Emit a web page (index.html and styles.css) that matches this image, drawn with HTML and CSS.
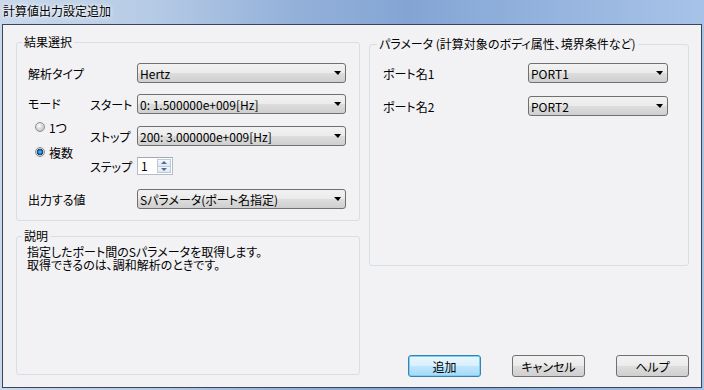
FILE: index.html
```html
<!DOCTYPE html>
<html lang="ja">
<head>
  <meta charset="UTF-8">
  <title>計算値出力設定追加</title>
  <link rel="stylesheet" href="styles.css">
</head>
<body>
  <div class="window">
    <div class="titlebar">計算値出力設定追加</div>
    <div class="client">
      <div class="col-left">
        <fieldset class="group group-result">
          <legend>結果選択</legend>
          <div class="group-body">
            <div class="row row-type">
              <span class="lbl lbl-main">解析タイプ</span>
              <div class="combo combo-main"><span class="combo-text">Hertz</span><span class="arrow"></span></div>
            </div>
            <div class="mode">
              <div class="mode-left">
                <div class="mode-title">モード</div>
                <label class="radio-row r-one"><span class="radio"></span>1つ</label>
                <label class="radio-row r-many"><span class="radio checked"></span>複数</label>
              </div>
              <div class="mode-right">
                <div class="row">
                  <span class="lbl lbl-sub">スタート</span>
                  <div class="combo combo-main"><span class="combo-text">0: 1.500000e+009[Hz]</span><span class="arrow"></span></div>
                </div>
                <div class="row row-stop">
                  <span class="lbl lbl-sub">ストップ</span>
                  <div class="combo combo-main"><span class="combo-text">200: 3.000000e+009[Hz]</span><span class="arrow"></span></div>
                </div>
                <div class="row row-step">
                  <span class="lbl lbl-sub">ステップ</span>
                  <div class="spin">
                    <span class="spin-val">1</span>
                    <span class="spin-btns">
                      <span class="spin-up"><i class="tri-up"></i></span>
                      <span class="spin-down"><i class="tri-down"></i></span>
                    </span>
                  </div>
                </div>
              </div>
            </div>
            <div class="row row-output">
              <span class="lbl lbl-main">出力する値</span>
              <div class="combo combo-main"><span class="combo-text">Sパラメータ(ポート名指定)</span><span class="arrow"></span></div>
            </div>
          </div>
        </fieldset>

        <fieldset class="group group-desc">
          <legend>説明</legend>
          <div class="desc-body">
            <p>指定したポート間のSパラメータを取得します。</p>
            <p>取得できるのは、調和解析のときです。</p>
          </div>
        </fieldset>
      </div>

      <div class="col-right">
        <fieldset class="group group-param">
          <legend>パラメータ (計算対象のボディ属性、境界条件など)</legend>
          <div class="param-body">
            <div class="row row-port1">
              <span class="lbl lbl-port">ポート名1</span>
              <div class="combo combo-port"><span class="combo-text">PORT1</span><span class="arrow"></span></div>
            </div>
            <div class="row row-port2">
              <span class="lbl lbl-port">ポート名2</span>
              <div class="combo combo-port"><span class="combo-text">PORT2</span><span class="arrow"></span></div>
            </div>
          </div>
        </fieldset>

        <div class="buttons">
          <button class="btn btn-default">追加</button>
          <button class="btn">キャンセル</button>
          <button class="btn">ヘルプ</button>
        </div>
      </div>
    </div>
  </div>
</body>
</html>
```

FILE: styles.css
```css
* {
  box-sizing: border-box;
}
body {
  margin: 0;
  font-family: "Noto Sans CJK JP", sans-serif;
  font-size: 12px;
  font-feature-settings: "palt";
  color: #000;
}
.window {
  width: 704px;
  height: 390px;
  display: flex;
  flex-direction: column;
  padding: 0 2px 2px 2px;
  background: linear-gradient(90deg, #c9d8ea 0%, #b5cae5 22%, #93b0d9 42%, #84a5d4 58%, #94b3de 78%, #a8c3e8 100%);
}
.titlebar {
  height: 24px;
  line-height: 22px;
  padding-left: 1px;
  font-feature-settings: normal;
  text-shadow: 0 0 6px #fff, 0 0 3px #fff;
}
.client {
  flex: 1;
  display: flex;
  gap: 9px;
  padding: 0 12px 0 13px;
  border: 1px solid #3a4658;
  background: #f2f1f4;
}

/* group boxes */
.group {
  margin: 0;
  padding: 0;
  border: 1px solid #d5dfe5;
  border-radius: 3px;
}
.group legend {
  padding: 0 2px;
  margin-left: 5px;
  line-height: 14px;
}
.col-left {
  width: 344px;
  display: flex;
  flex-direction: column;
  gap: 8px;
  padding-top: 10px;
}
.group-result {
  height: 186px;
}
.group-desc {
  height: 146px;
}
.col-right {
  width: 320px;
  display: flex;
  flex-direction: column;
  justify-content: space-between;
  padding: 12px 0 10px 0;
}
.group-param {
  height: 229px;
}
.group-param legend {
  margin-left: 7px;
}

.group-body {
  padding: 0 13px 0 11px;
}
.row {
  display: flex;
  align-items: center;
  height: 20px;
}
.row-type {
  margin-top: 14px;
}
.lbl {
  white-space: nowrap;
}
.lbl-main {
  width: 109px;
}
.lbl-sub {
  width: 47px;
}

/* combo boxes */
.combo {
  height: 20px;
  display: flex;
  align-items: center;
  padding: 0 4px 0 2px;
  border: 1px solid #707070;
  border-radius: 3px;
  background: linear-gradient(#f2f2f2 0%, #ebebeb 48%, #dddddd 52%, #cfcfcf 100%);
}
.combo-text {
  flex: 1;
  white-space: nowrap;
  overflow: hidden;
}
.combo-main {
  width: 209px;
}
.arrow {
  width: 0;
  height: 0;
  border-left: 4px solid transparent;
  border-right: 3px solid transparent;
  border-top: 4px solid #000;
}

/* mode block */
.mode {
  display: flex;
  margin-top: 11px;
}
.mode-left {
  width: 62px;
}
.mode-title {
  height: 20px;
  line-height: 20px;
}
.radio-row {
  display: flex;
  align-items: center;
  gap: 4px;
  height: 18px;
  padding-left: 7px;
}
.r-one {
  margin-top: 4px;
}
.r-many {
  margin-top: 7px;
}
.radio {
  width: 10px;
  height: 10px;
  border-radius: 50%;
  border: 1px solid #8c8e91;
  background: radial-gradient(circle at 40% 35%, #ffffff 0, #e6e6e6 2px, #c9c9c9 5px);
}
.radio.checked {
  background: radial-gradient(circle at 50% 50%, #7ed2f7 0, #2b82c6 1.5px, #123f78 3px, #d8d8d8 3.6px, #f2f2f2 5px);
}
.mode-right {
  display: flex;
  flex-direction: column;
}
.row-stop {
  margin-top: 12px;
}
.row-step {
  margin-top: 11px;
  height: 18px;
}
.spin {
  width: 36px;
  height: 18px;
  display: flex;
  border: 1px solid #b7bcc4;
  border-top-color: #a3a8b0;
  background: #fff;
}
.spin-val {
  flex: 1;
  padding-left: 3px;
  line-height: 16px;
}
.spin-btns {
  width: 15px;
  display: flex;
  flex-direction: column;
  padding: 1px 1px 1px 0;
}
.spin-up,
.spin-down {
  flex: 1;
  display: flex;
  align-items: center;
  justify-content: center;
  border: 1px solid #bccbdc;
  background: linear-gradient(#f4f8fc, #dde7f1);
}
.spin-up {
  border-bottom: none;
}
.tri-up {
  border-left: 3px solid transparent;
  border-right: 3px solid transparent;
  border-bottom: 3px solid #4f6d98;
}
.tri-down {
  border-left: 3px solid transparent;
  border-right: 3px solid transparent;
  border-top: 3px solid #4f6d98;
}
.row-output {
  margin-top: 14px;
}

/* description */
.desc-body {
  padding: 2px 11px 0 10px;
}
.desc-body p {
  margin: 0;
  line-height: 13px;
}

/* parameters */
.param-body {
  padding-left: 13px;
}
.lbl-port {
  width: 145px;
}
.combo-port {
  width: 140px;
}
.row-port1 {
  margin-top: 12px;
}
.row-port2 {
  margin-top: 13px;
}

/* buttons */
.buttons {
  display: flex;
  justify-content: flex-end;
  gap: 31px;
}
.btn {
  width: 73px;
  height: 22px;
  padding: 0;
  font: inherit;
  color: #000;
  border: 1px solid #707070;
  border-radius: 3px;
  background: linear-gradient(#f2f2f2 0%, #ebebeb 48%, #dddddd 52%, #cfcfcf 100%);
}
.btn-default {
  border-color: #3c7fb1;
  box-shadow: inset 0 0 0 1px #74d2f6;
  background: linear-gradient(#eaf6fd 0%, #d9f0fc 48%, #bee6fd 52%, #a7d9f5 100%);
}
```
